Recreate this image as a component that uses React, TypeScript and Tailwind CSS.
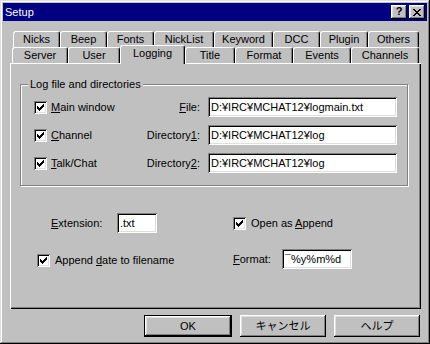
import React from 'react';

const raised = 'shadow-[inset_-1px_-1px_#000,inset_1px_1px_#fff,inset_-2px_-2px_#808080,inset_2px_2px_#dfdfdf]';
const sunken = 'shadow-[inset_1px_1px_#808080,inset_-1px_-1px_#fff,inset_2px_2px_#000,inset_-2px_-2px_#dfdfdf]';

const backRow = [
  { label: 'Nicks', w: 'w-[47px]' },
  { label: 'Beep', w: 'w-[47px]' },
  { label: 'Fonts', w: 'w-[47px]' },
  { label: 'NickList', w: 'w-[60px]' },
  { label: 'Keyword', w: 'w-[59px]' },
  { label: 'DCC', w: 'w-[47px]' },
  { label: 'Plugin', w: 'w-[48px]' },
  { label: 'Others', w: 'w-[51px]' },
];

const frontRow = [
  { label: 'Server', w: 'w-[56px]' },
  { label: 'User', w: 'w-[52px]' },
  { label: 'Logging', w: 'w-[65px]', active: true },
  { label: 'Title', w: 'w-[50px]' },
  { label: 'Format', w: 'w-[58px]' },
  { label: 'Events', w: 'w-[58px]' },
  { label: 'Channels', w: 'w-[68px]' },
];

const tabBase =
  'flex items-center justify-center bg-[#c0c0c0] border-l border-t border-r border-white border-r-black rounded-t-[3px] shadow-[inset_-1px_0_#808080]';

const Check = () => (
  <span className={`w-[13px] h-[13px] bg-white ${sunken} flex items-center justify-center shrink-0`}>
    <svg width="7" height="7" viewBox="0 0 7 7" shapeRendering="crispEdges">
      <path d="M7 0H6V1H5V2H4V3H3V4H2V3H1V2H0V5H1V6H2V7H3V6H4V5H5V4H6V3H7V0Z" fill="#000" />
    </svg>
  </span>
);

const Field = ({ value, w }: { value: string; w: string }) => (
  <div className={`${w} h-[20px] bg-white ${sunken} pl-[3px] flex items-center whitespace-nowrap overflow-hidden`}>
    {value}
  </div>
);

export default function App() {
  return (
    <div className="w-[430px] h-[344px] bg-[#c0c0c0] p-[3px] flex flex-col text-black text-[11px] leading-[13px] font-['Liberation_Sans','Noto_Sans_CJK_JP',sans-serif] shadow-[inset_-1px_-1px_#000,inset_1px_1px_#dfdfdf,inset_-2px_-2px_#808080,inset_2px_2px_#fff]">
      {/* title bar */}
      <div className="h-[18px] bg-[#000080] flex items-center pl-[2px] pr-[2px]">
        <span className="flex-1 text-white">Setup</span>
        <div className="flex gap-[2px]">
          <div className={`w-[16px] h-[14px] bg-[#c0c0c0] ${raised} flex items-center justify-center font-bold text-[11px] leading-none pb-[1px]`}>
            ?
          </div>
          <div className={`w-[16px] h-[14px] bg-[#c0c0c0] ${raised} flex items-center justify-center`}>
            <svg width="8" height="7" viewBox="0 0 8 7" shapeRendering="crispEdges">
              <path d="M0 0h2v1h1v1h2V1h1V0h2v1H7v1H6v1H5v1h1v1h1v1h1v1H6V6H5V5H3v1H2v1H0V6h1V5h1V4h1V3H2V2H1V1H0V0z" fill="#000" />
            </svg>
          </div>
        </div>
      </div>

      {/* tabs */}
      <div className="mt-[10px] ml-[10px] flex h-[16px]">
        {backRow.map((t) => (
          <div key={t.label} className={`${tabBase} ${t.w} h-[16px]`}>
            {t.label}
          </div>
        ))}
      </div>
      <div className="ml-[9px] flex h-[16px] items-start">
        {frontRow.map((t) =>
          t.active ? (
            <div key={t.label} className={`${tabBase} ${t.w} h-[19px] -mt-[2px] pb-[3px] relative z-10`}>
              {t.label}
            </div>
          ) : (
            <div key={t.label} className={`${tabBase} ${t.w} h-[16px]`}>
              {t.label}
            </div>
          )
        )}
      </div>

      {/* panel */}
      <div className="ml-[7px] w-[411px] h-[246px] pt-[21px] pl-[10px] shadow-[inset_1px_1px_#fff,inset_-1px_-1px_#000,inset_-2px_-2px_#808080]">
        <div className="relative w-[388px] border border-[#808080] shadow-[inset_1px_1px_#fff,1px_1px_#fff] pt-[12px] pb-[12px] pl-[13px] flex flex-col gap-[8px]">
          <span className="absolute left-[7px] top-[-8px] px-[2px] bg-[#c0c0c0] leading-[14px]">Log file and directories</span>

          <div className="flex items-center h-[20px]">
            <div className="w-[106px] flex items-center gap-[4px]">
              <Check />
              <span><u>M</u>ain window</span>
            </div>
            <span className="w-[60px] text-right"><u>F</u>ile:</span>
            <div className="ml-[8px]">
              <Field w="w-[189px]" value="D:¥IRC¥MCHAT12¥logmain.txt" />
            </div>
          </div>

          <div className="flex items-center h-[20px]">
            <div className="w-[106px] flex items-center gap-[4px]">
              <Check />
              <span><u>C</u>hannel</span>
            </div>
            <span className="w-[60px] text-right">Directory<u>1</u>:</span>
            <div className="ml-[8px]">
              <Field w="w-[189px]" value="D:¥IRC¥MCHAT12¥log" />
            </div>
          </div>

          <div className="flex items-center h-[20px]">
            <div className="w-[106px] flex items-center gap-[4px]">
              <Check />
              <span><u>T</u>alk/Chat</span>
            </div>
            <span className="w-[60px] text-right">Directory<u>2</u>:</span>
            <div className="ml-[8px]">
              <Field w="w-[189px]" value="D:¥IRC¥MCHAT12¥log" />
            </div>
          </div>
        </div>

        <div className="ml-[17px] mt-[27px] flex flex-col gap-[16px]">
          <div className="flex items-center h-[20px]">
            <div className="w-[196px] flex items-center">
              <span className="ml-[14px] w-[66px]"><u>E</u>xtension:</span>
              <Field w="w-[40px]" value=".txt" />
            </div>
            <div className="flex items-center gap-[5px]">
              <Check />
              <span>Open as <u>A</u>ppend</span>
            </div>
          </div>

          <div className="flex items-center h-[20px]">
            <div className="w-[196px] flex items-center gap-[5px] pt-[2px]">
              <Check />
              <span>Append <u>d</u>ate to filename</span>
            </div>
            <span className="w-[49px]"><u>F</u>ormat:</span>
            <Field w="w-[70px]" value="¯%y%m%d" />
          </div>
        </div>
      </div>

      {/* buttons */}
      <div className="mt-[6px] mr-[7px] flex justify-end gap-[8px]">
        <button className={`w-[88px] h-[22px] bg-[#c0c0c0] border border-black ${raised}`}>OK</button>
        <button className={`w-[86px] h-[22px] bg-[#c0c0c0] ${raised}`}>キャンセル</button>
        <button className={`w-[86px] h-[22px] bg-[#c0c0c0] ${raised}`}>ヘルプ</button>
      </div>
    </div>
  );
}
